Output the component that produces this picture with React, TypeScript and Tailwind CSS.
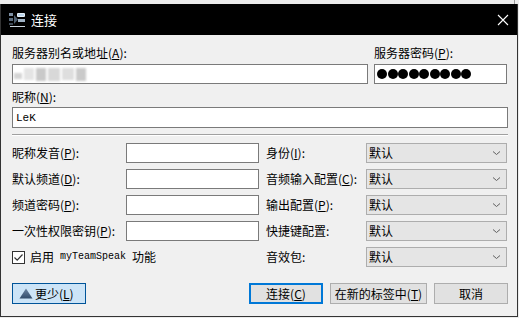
import React from "react";

const F = { fontFamily: '"Noto Sans CJK SC", "Noto Sans", sans-serif' };
const MONO = { fontFamily: '"Liberation Mono", "Noto Sans CJK SC", monospace' };

function Lbl({ t, k, w }: { t: string; k?: string; w?: string }) {
  return (
    <div className={`${w ?? ""} text-[12px] leading-[16px] text-black whitespace-nowrap`}>
      {t}
      {k ? (
        <>
          (<u className="underline-offset-1">{k}</u>):
        </>
      ) : (
        ":"
      )}
    </div>
  );
}

function Sel() {
  return (
    <div className="w-[141px] h-[20px] bg-[#e5e5e5] border border-[#adadad] flex items-center justify-between pl-[2px] pr-[5px]">
      <span className="text-[12px] leading-[16px] text-black">默认</span>
      <svg width="9" height="6" viewBox="0 0 9 6">
        <path d="M1 1.5 L4.5 4.5 L8 1.5" fill="none" stroke="#606060" strokeWidth="1" />
      </svg>
    </div>
  );
}

function Inp({ w }: { w: string }) {
  return <div className={`${w} h-[20px] bg-white border border-[#7a7a7a]`} />;
}

function Row({ l, lk, r, rk }: { l?: string; lk?: string; r: string; rk?: string }) {
  return (
    <div className="flex items-center h-[20px]">
      <Lbl t={l!} k={lk} w="w-[114px]" />
      <Inp w="w-[133px]" />
      <div className="w-[7px]" />
      <Lbl t={r} k={rk} w="w-[100px]" />
      <Sel />
    </div>
  );
}

export default function App() {
  return (
    <div className="w-[519px] h-[318px] bg-[#ececec] overflow-hidden" style={F}>
      <div className="h-[4px] flex">
        <div className="w-[514px]" />
        <div className="w-[1px] bg-[#9a9a9a]" />
      </div>
      <div className="w-[518px] h-[313px] border-x border-b border-[#333333] bg-[#f0f0f0] flex flex-col">
        {/* title bar */}
        <div className="h-[31px] bg-black flex items-center">
          <svg className="ml-[8px]" width="17" height="16" viewBox="0 0 17 16">
            <rect x="0" y="1" width="4" height="3" fill="#7d8fa3" />
            <rect x="0" y="6" width="4" height="3" fill="#5a6b7d" />
            <rect x="0" y="11" width="4" height="2" fill="#3e4a57" />
            <path d="M5 3 L9 7.5 L5 12 Z" fill="#4d5d6e" />
            <rect x="8" y="1" width="8" height="4" rx="1" fill="#e6f0f8" />
            <rect x="9" y="2" width="6" height="2" fill="#b9d3ea" />
            <rect x="9" y="7" width="7" height="3" fill="#9fb2c4" />
            <rect x="1" y="14" width="15" height="1" fill="#c9d3dc" />
          </svg>
          <span className="ml-[5px] text-white text-[13px] leading-[16px]">连接</span>
          <div className="flex-1" />
          <svg className="mr-[8px]" width="12" height="12" viewBox="0 0 12 12">
            <path d="M1 1 L11 11 M11 1 L1 11" stroke="#ffffff" strokeWidth="1.1" />
          </svg>
        </div>
        {/* body */}
        <div className="pl-[11px] pr-[9px] flex flex-col">
          <div className="flex gap-[6px] mt-[10px]">
            <div className="w-[356px] flex flex-col">
              <Lbl t="服务器别名或地址" k="A" />
              <div className="mt-[3px] h-[20px] bg-white border border-[#7a7a7a] flex items-center pl-[1px] gap-[2px]">
                <div className="w-[8px] h-[6px] bg-[#d4d4d4] blur-[1px] mt-[4px]" />
                <div className="w-[10px] h-[12px] bg-[#e4e4e4] blur-[1px]" />
                <div className="w-[10px] h-[13px] bg-[#c9c9c9] blur-[1px]" />
                <div className="w-[12px] h-[13px] bg-[#d8d8d8] blur-[1px]" />
                <div className="w-[12px] h-[12px] bg-[#dedede] blur-[1px]" />
                <div className="w-[10px] h-[13px] bg-[#cacaca] blur-[1px]" />
              </div>
            </div>
            <div className="w-[133px] flex flex-col">
              <Lbl t="服务器密码" k="P" />
              <div className="mt-[3px] h-[20px] bg-white border border-[#7a7a7a] flex items-center pl-[2px]">
                {Array.from({ length: 9 }).map((_, i) => (
                  <div key={i} className="w-[10.5px] flex justify-center">
                    <div className="w-[10px] h-[10px] rounded-full bg-black" />
                  </div>
                ))}
              </div>
            </div>
          </div>
          <div className="mt-[5px]">
            <Lbl t="昵称" k="N" />
          </div>
          <div className="mt-[2px] h-[21px] bg-white border border-[#7a7a7a] flex items-center pl-[3px]">
            <span className="text-[11px] leading-[14px] text-black" style={MONO}>
              LeK
            </span>
          </div>
          <div className="mt-[6px] h-[2px] border-t border-[#a0a0a0] border-b border-b-white" />
          <div className="mt-[7px] flex flex-col gap-[6px]">
            <Row l="昵称发音" lk="P" r="身份" rk="I" />
            <Row l="默认频道" lk="D" r="音频输入配置" rk="C" />
            <Row l="频道密码" lk="P" r="输出配置" rk="P" />
            <Row l="一次性权限密钥" lk="P" r="快捷键配置" />
            <div className="flex items-center h-[20px]">
              <div className="w-[254px] flex items-center">
                <div className="w-[13px] h-[13px] border border-[#333333] bg-white flex items-center justify-center">
                  <svg width="11" height="11" viewBox="0 0 11 11">
                    <path d="M1.5 5.5 L4.2 8.2 L9.5 2.5" fill="none" stroke="#333333" strokeWidth="1.2" />
                  </svg>
                </div>
                <span className="ml-[5px] text-[12px] leading-[16px] text-black">启用</span>
                <span className="ml-[6px] text-[10px] leading-[16px] text-black" style={MONO}>
                  myTeamSpeak
                </span>
                <span className="ml-[6px] text-[12px] leading-[16px] text-black">功能</span>
              </div>
              <Lbl t="音效包" w="w-[100px]" />
              <Sel />
            </div>
          </div>
          <div className="mt-[16px] flex items-center h-[21px]">
            <div className="w-[74px] h-[21px] bg-[#cce4f7] border border-[#005499] flex items-center pl-[6px]">
              <svg width="14" height="11" viewBox="0 0 14 11">
                <defs>
                  <linearGradient id="tg" x1="0" y1="0" x2="0" y2="1">
                    <stop offset="0" stopColor="#6d86a3" />
                    <stop offset="1" stopColor="#324c6b" />
                  </linearGradient>
                </defs>
                <path d="M7 0.5 L13.5 10.5 L0.5 10.5 Z" fill="url(#tg)" />
              </svg>
              <span className="ml-[2px] text-[12px] leading-[16px] text-black">
                更少(<u>L</u>)
              </span>
            </div>
            <div className="flex-1" />
            <div className="w-[74px] h-[21px] bg-[#e1e1e1] border-2 border-[#0078d7] flex items-center justify-center text-[12px] leading-[16px] text-black">
              连接(<u>C</u>)
            </div>
            <div className="ml-[7px] w-[97px] h-[21px] bg-[#e1e1e1] border border-[#adadad] flex items-center justify-center text-[12px] leading-[16px] text-black">
              在新的标签中(<u>T</u>)
            </div>
            <div className="ml-[7px] w-[74px] h-[21px] bg-[#e1e1e1] border border-[#adadad] flex items-center justify-center text-[12px] leading-[16px] text-black">
              取消
            </div>
          </div>
        </div>
      </div>
    </div>
  );
}
